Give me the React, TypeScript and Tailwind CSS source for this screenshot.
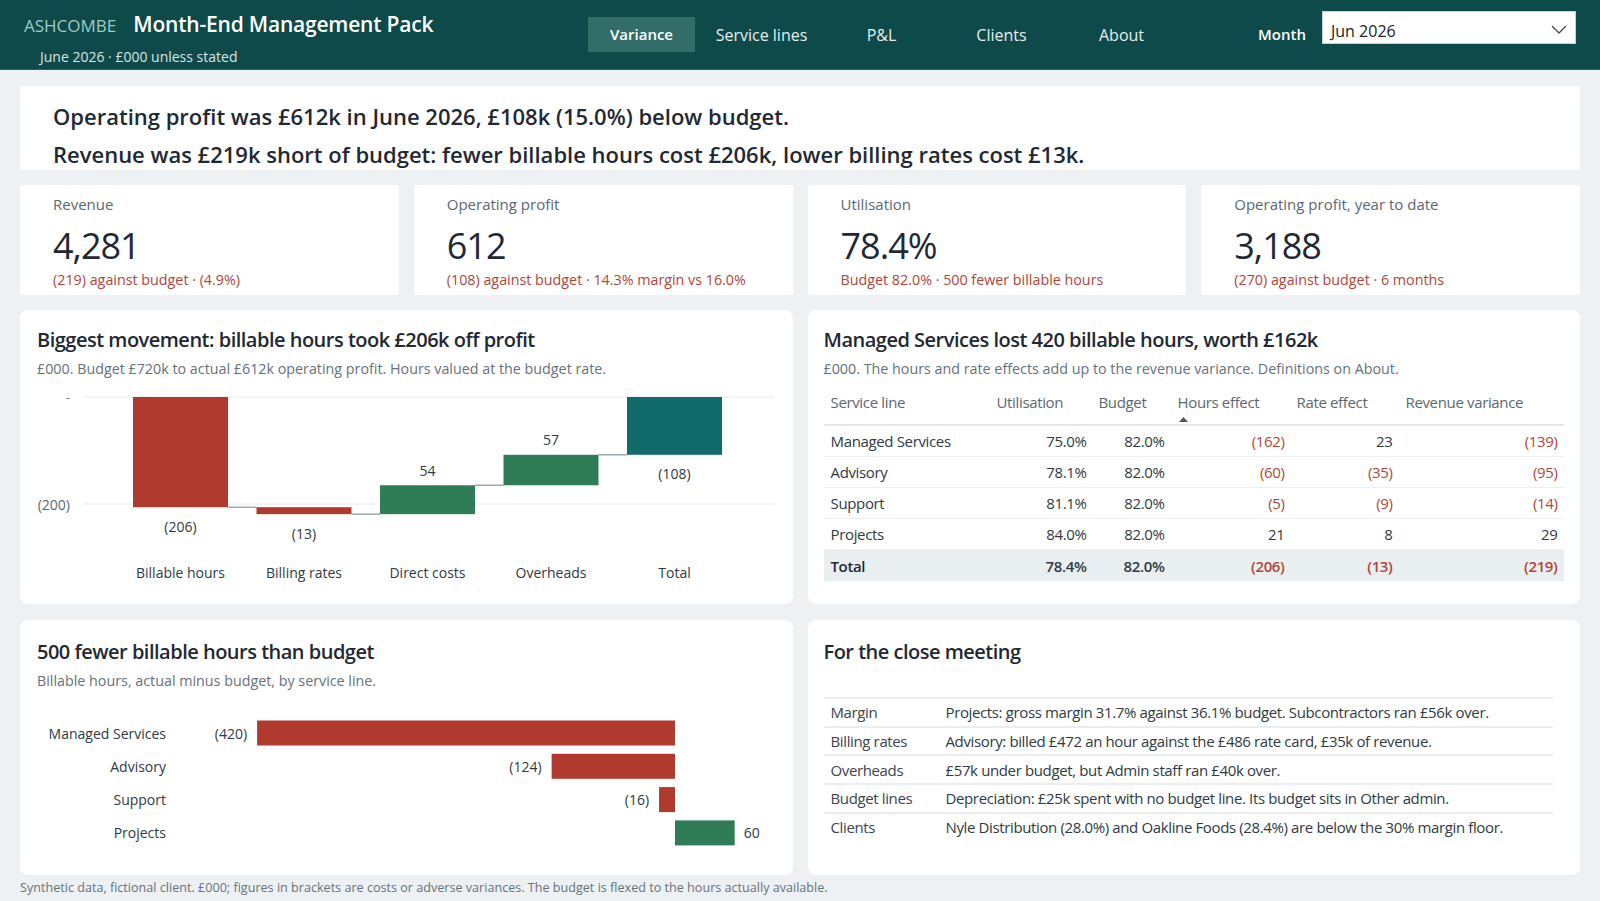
import React from "react";

const RED = "#b03a2e";
const GREEN = "#2f7d57";
const TEAL = "#106b6a";

const tabs = ["Variance", "Service lines", "P&L", "Clients", "About"];

const kpis = [
  { label: "Revenue", value: "4,281", note: "(219) against budget · (4.9%)" },
  { label: "Operating profit", value: "612", note: "(108) against budget · 14.3% margin vs 16.0%" },
  { label: "Utilisation", value: "78.4%", note: "Budget 82.0% · 500 fewer billable hours" },
  { label: "Operating profit, year to date", value: "3,188", note: "(270) against budget · 6 months" },
];

type Row = { name: string; util: string; budget: string; hours: string; rate: string; rev: string };

const serviceRows: Row[] = [
  { name: "Managed Services", util: "75.0%", budget: "82.0%", hours: "(162)", rate: "23", rev: "(139)" },
  { name: "Advisory", util: "78.1%", budget: "82.0%", hours: "(60)", rate: "(35)", rev: "(95)" },
  { name: "Support", util: "81.1%", budget: "82.0%", hours: "(5)", rate: "(9)", rev: "(14)" },
  { name: "Projects", util: "84.0%", budget: "82.0%", hours: "21", rate: "8", rev: "29" },
];

const totalRow: Row = { name: "Total", util: "78.4%", budget: "82.0%", hours: "(206)", rate: "(13)", rev: "(219)" };

const notes = [
  { k: "Margin", v: "Projects: gross margin 31.7% against 36.1% budget. Subcontractors ran £56k over." },
  { k: "Billing rates", v: "Advisory: billed £472 an hour against the £486 rate card, £35k of revenue." },
  { k: "Overheads", v: "£57k under budget, but Admin staff ran £40k over." },
  { k: "Budget lines", v: "Depreciation: £25k spent with no budget line. Its budget sits in Other admin." },
  { k: "Clients", v: "Nyle Distribution (28.0%) and Oakline Foods (28.4%) are below the 30% margin floor." },
];

const hoursByLine = [
  { name: "Managed Services", value: -420 },
  { name: "Advisory", value: -124 },
  { name: "Support", value: -16 },
  { name: "Projects", value: 60 },
];

const fmt = (v: number) => (v < 0 ? `(${Math.abs(v)})` : `${v}`);
const isNeg = (s: string) => s.startsWith("(");

function Header() {
  return (
    <header className="h-[70px] shrink-0 bg-[#0e4a4a] border-b border-[#2a6260] flex items-start text-white">
      <div className="w-[588px] shrink-0 pl-[24px] pt-[9px]">
        <div className="flex items-baseline gap-[17px] leading-[30px]">
          <span className="text-[17px] text-[#9fcac6]">ASHCOMBE</span>
          <span className="text-[21px] font-semibold tracking-[-0.2px] text-white">Month-End Management Pack</span>
        </div>
        <div className="mt-[6px] pl-[16px] text-[14px] leading-[20px] text-[#d6e4e3]">June 2026 · £000 unless stated</div>
      </div>
      <nav className="flex gap-[13px] mt-[17px]">
        {tabs.map((t, i) =>
          i === 0 ? (
            <div key={t} className="w-[107px] h-[35px] flex items-center justify-center bg-[#336d69] text-[15px] font-semibold text-white">
              {t}
            </div>
          ) : (
            <div key={t} className="w-[107px] h-[35px] flex items-center justify-center text-[16px] text-[#e6efee]">
              {t}
            </div>
          )
        )}
      </nav>
      <div className="ml-auto pr-[24px] flex items-start">
        <span className="mt-[24px] text-[15px] font-semibold leading-[20px] text-white">Month</span>
        <div className="ml-[16px] mt-[11px] w-[254px] h-[33px] bg-white border border-[#c9d3d6] flex items-center justify-between pl-[8px] pr-[8px]">
          <span className="mt-[6px] text-[16px] leading-[20px] text-[#222]">Jun 2026</span>
          <svg width="16" height="9" viewBox="0 0 16 9" fill="none" className="mt-[3px]">
            <path d="M1 1l7 7 7-7" stroke="#4a4a4a" strokeWidth="1.3" />
          </svg>
        </div>
      </div>
    </header>
  );
}

function Waterfall() {
  const top = 17;
  const k = 0.535;
  const y = (v: number) => top - v * k;
  const steps = [
    { label: "Billable hours", value: -206, color: RED },
    { label: "Billing rates", value: -13, color: RED },
    { label: "Direct costs", value: 54, color: GREEN },
    { label: "Overheads", value: 57, color: GREEN },
  ];
  const xs = [113, 236.5, 360, 483.5, 607];
  const w = 95;
  let run = 0;
  const bars = steps.map((s, i) => {
    const from = run;
    const to = run + s.value;
    run = to;
    return { ...s, x: xs[i], y1: Math.min(y(from), y(to)), y2: Math.max(y(from), y(to)), end: y(to) };
  });
  bars.push({ label: "Total", value: -108, color: TEAL, x: xs[4], y1: y(0), y2: y(-108), end: y(-108) });

  return (
    <svg width="772" height="210" className="block mt-[1px]">
      <line x1="63" x2="754" y1={top} y2={top} stroke="#e4e8eb" strokeWidth="1" />
      <line x1="63" x2="754" y1={y(-200)} y2={y(-200)} stroke="#e4e8eb" strokeWidth="1" />
      <text x="46" y={top} fontSize="13" fill="#66717c" dominantBaseline="central">-</text>
      <text x="50" y={y(-200)} fontSize="14" fill="#5c6773" textAnchor="end" dominantBaseline="central">(200)</text>
      {bars.slice(0, 4).map((b, i) => (
        <line key={`c${i}`} x1={b.x + w} x2={xs[i + 1]} y1={b.end} y2={b.end} stroke="#9aa3ab" strokeWidth="1.4" />
      ))}
      {bars.map((b) => (
        <rect key={b.label} x={b.x} y={b.y1} width={w} height={Math.max(b.y2 - b.y1, 1)} fill={b.color} />
      ))}
      {bars.map((b) => {
        const cx = b.x + w / 2;
        const ly = b.value < 0 ? b.y2 + 19 : b.y1 - 15;
        return (
          <text key={`v${b.label}`} x={cx} y={ly} fontSize="14" fill="#2f3a45" textAnchor="middle" dominantBaseline="central">
            {fmt(b.value)}
          </text>
        );
      })}
      {bars.map((b) => (
        <text key={`l${b.label}`} x={b.x + w / 2} y={192} fontSize="14" fill="#2f3a45" textAnchor="middle" dominantBaseline="central">
          {b.label}
        </text>
      ))}
    </svg>
  );
}

function HoursBars() {
  const zero = 655;
  const k = 0.995;
  return (
    <svg width="772" height="160" className="block mt-[9px]">
      {hoursByLine.map((r, i) => {
        const cy = 33 + i * 33.3;
        const len = Math.abs(r.value) * k;
        const x = r.value < 0 ? zero - len : zero;
        return (
          <g key={r.name}>
            <text x="146" y={cy} fontSize="14" fill="#2f3a45" textAnchor="end" dominantBaseline="central">
              {r.name}
            </text>
            <rect x={x} y={cy - 12.5} width={len} height="25" fill={r.value < 0 ? RED : GREEN} />
            {r.value < 0 ? (
              <text x={x - 10} y={cy} fontSize="14" fill="#2f3a45" textAnchor="end" dominantBaseline="central">
                {fmt(r.value)}
              </text>
            ) : (
              <text x={x + len + 9} y={cy} fontSize="14" fill="#2f3a45" dominantBaseline="central">
                {fmt(r.value)}
              </text>
            )}
          </g>
        );
      })}
    </svg>
  );
}

function CardHead({ title, sub, top }: { title: string; sub?: string; top: string }) {
  return (
    <div className={top}>
      <h2 className="text-[20px] font-semibold leading-[28px] tracking-[-0.5px] text-[#1f2933]">{title}</h2>
      {sub && <p className="mt-[5px] text-[14.3px] leading-[20px] text-[#66717c]">{sub}</p>}
    </div>
  );
}

const cols = "grid grid-cols-[167px_102px_78px_120px_108px_165px]";

function Num({ v, bold }: { v: string; bold?: boolean }) {
  return (
    <div className={`text-right px-[6px] ${isNeg(v) ? "text-[#b4443a]" : "text-[#2f3a45]"} ${bold ? "font-semibold" : ""}`}>{v}</div>
  );
}

function ServiceTable() {
  return (
    <div className="w-[740px] text-[15px] leading-[20px] tracking-[-0.35px]">
      <div className={`${cols} h-[47px] items-center border-b-2 border-[#e3e7ea] text-[#5c6773]`}>
        <div className="pl-[7px]">Service line</div>
        <div className="pl-[6px]">Utilisation</div>
        <div className="pl-[6px]">Budget</div>
        <div className="pl-[7px] relative">
          Hours effect
          <svg width="9" height="5" viewBox="0 0 9 5" className="absolute left-[8px] top-[25px]">
            <path d="M0 5L4.5 0L9 5Z" fill="#555" />
          </svg>
        </div>
        <div className="pl-[6px]">Rate effect</div>
        <div className="pl-[7px]">Revenue variance</div>
      </div>
      {serviceRows.map((r) => (
        <div key={r.name} className={`${cols} h-[31px] items-center border-b border-[#edf0f2]`}>
          <div className="pl-[7px] text-[#2f3a45]">{r.name}</div>
          <Num v={r.util} />
          <Num v={r.budget} />
          <Num v={r.hours} />
          <Num v={r.rate} />
          <Num v={r.rev} />
        </div>
      ))}
      <div className={`${cols} h-[31px] items-center bg-[#e9eff1]`}>
        <div className="pl-[7px] font-semibold text-[#1f2933]">{totalRow.name}</div>
        <Num v={totalRow.util} bold />
        <Num v={totalRow.budget} bold />
        <Num v={totalRow.hours} bold />
        <Num v={totalRow.rate} bold />
        <Num v={totalRow.rev} bold />
      </div>
    </div>
  );
}

function CloseNotes() {
  return (
    <div className="mt-[31px] w-[729px] text-[15px] leading-[20px] tracking-[-0.37px]">
      {notes.map((n) => (
        <div key={n.k} className="grid grid-cols-[122px_1fr] h-[28.7px] items-center border-t-2 border-[#e9edf0]">
          <div className="pl-[7px] text-[#3a4550]">{n.k}</div>
          <div className="text-[#2f3a45]">{n.v}</div>
        </div>
      ))}
    </div>
  );
}

export default function App() {
  return (
    <div className="w-[1600px] h-[901px] overflow-hidden bg-[#edf1f4] font-['Open_Sans',sans-serif] text-[#1f2933] flex flex-col">
      <Header />
      <main className="flex flex-col gap-[15px] px-[20px] pt-[16px]">
        <div className="bg-white rounded-[3px] h-[84px] px-[33px] pt-[11px] text-[22px] font-semibold leading-[38px] text-[#1f2933]">
          <p>Operating profit was £612k in June 2026, £108k (15.0%) below budget.</p>
          <p>Revenue was £219k short of budget: fewer billable hours cost £206k, lower billing rates cost £13k.</p>
        </div>

        <div className="grid grid-cols-4 gap-[15px] h-[110px]">
          {kpis.map((c) => (
            <div key={c.label} className="bg-white rounded-[3px] px-[33px] pt-[9px]">
              <div className="text-[15px] leading-[20px] text-[#5c6773]">{c.label}</div>
              <div className="mt-[10px] text-[36px] leading-[44px] tracking-[-1px] text-[#1f2933]">{c.value}</div>
              <div className="mt-[2px] text-[14.3px] leading-[20px] text-[#b4443a]">{c.note}</div>
            </div>
          ))}
        </div>

        <div className="grid grid-cols-2 gap-[15px] h-[294px]">
          <section className="bg-white rounded-[8px]">
            <CardHead
              top="px-[17px] pt-[16px]"
              title="Biggest movement: billable hours took £206k off profit"
              sub="£000. Budget £720k to actual £612k operating profit. Hours valued at the budget rate."
            />
            <Waterfall />
          </section>
          <section className="bg-white rounded-[8px] px-[16px]">
            <CardHead
              top="pt-[16px]"
              title="Managed Services lost 420 billable hours, worth £162k"
              sub="£000. The hours and rate effects add up to the revenue variance. Definitions on About."
            />
            <ServiceTable />
          </section>
        </div>

        <div className="grid grid-cols-2 gap-[15px] h-[255px] mt-[1px]">
          <section className="bg-white rounded-[8px]">
            <CardHead
              top="px-[17px] pt-[18px]"
              title="500 fewer billable hours than budget"
              sub="Billable hours, actual minus budget, by service line."
            />
            <HoursBars />
          </section>
          <section className="bg-white rounded-[8px] px-[16px]">
            <CardHead top="pt-[18px]" title="For the close meeting" />
            <CloseNotes />
          </section>
        </div>
      </main>
      <footer className="px-[20px] h-[26px] flex items-center text-[12.6px] text-[#66717c]">
        Synthetic data, fictional client. £000; figures in brackets are costs or adverse variances. The budget is flexed to the hours actually available.
      </footer>
    </div>
  );
}
